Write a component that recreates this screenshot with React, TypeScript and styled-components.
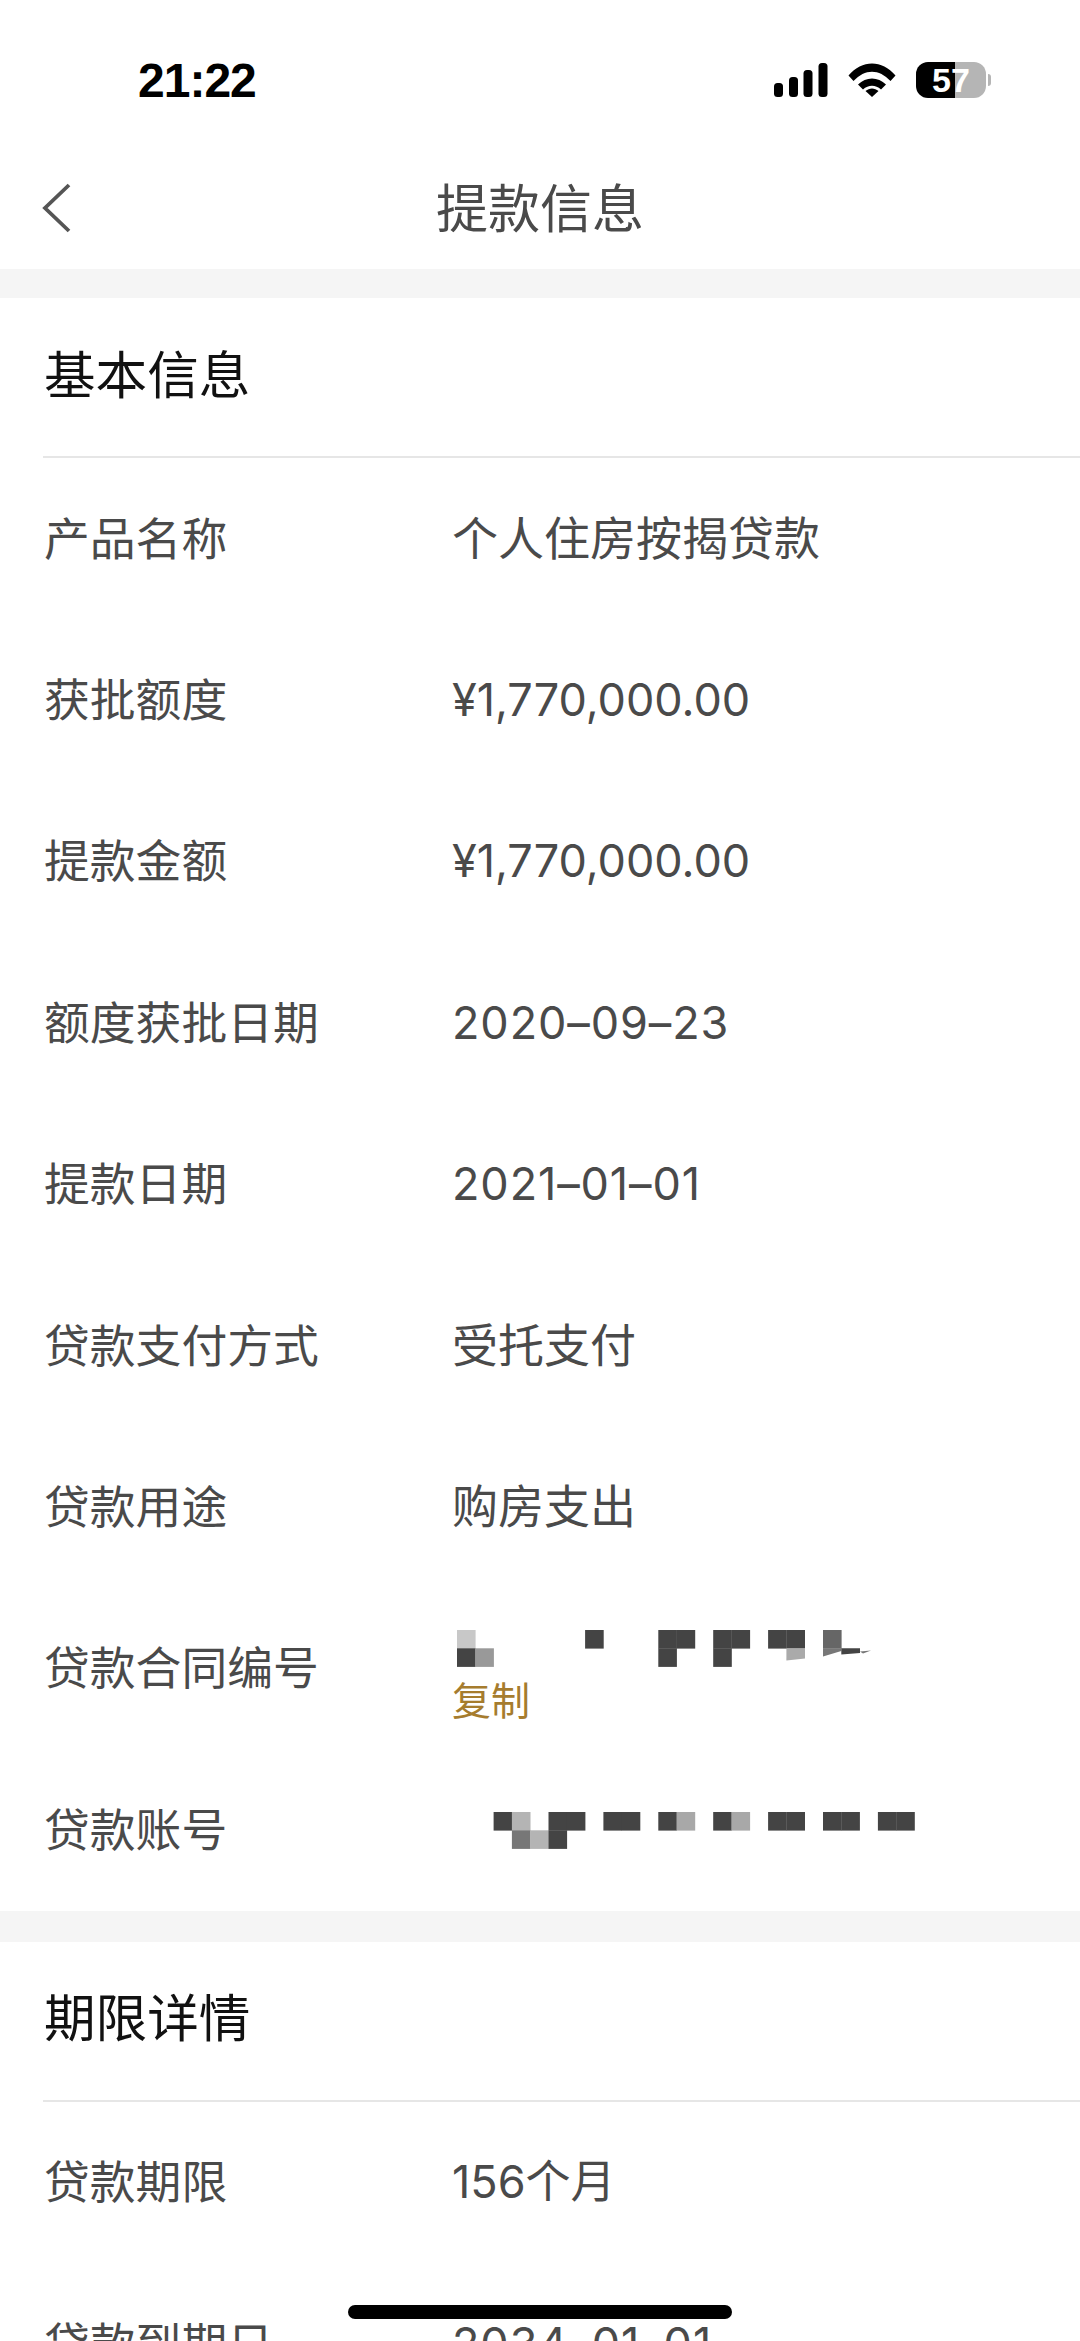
import React from 'react';
import styled, { createGlobalStyle } from 'styled-components';

const SANS = '"Liberation Sans", "Noto Sans CJK SC", sans-serif';
const NUMERIC_FONT = 'Inter, "Noto Sans CJK SC", sans-serif';
const DARK = '#444';

type Cell = { c: number; r: number; fill: string };

const contractCells: Cell[] = [
  { c: 0, r: 0, fill: '#c8c8c8' },
  { c: 7, r: 0, fill: DARK },
  { c: 11, r: 0, fill: DARK },
  { c: 12, r: 0, fill: DARK },
  { c: 14, r: 0, fill: DARK },
  { c: 15, r: 0, fill: DARK },
  { c: 17, r: 0, fill: DARK },
  { c: 18, r: 0, fill: DARK },
  { c: 20, r: 0, fill: '#666' },
  { c: 0, r: 1, fill: DARK },
  { c: 1, r: 1, fill: '#999' },
  { c: 11, r: 1, fill: DARK },
  { c: 14, r: 1, fill: DARK },
];

const accountCells: Cell[] = [
  { c: 2, r: 0, fill: DARK },
  { c: 3, r: 0, fill: '#b4b4b4' },
  { c: 5, r: 0, fill: DARK },
  { c: 6, r: 0, fill: DARK },
  { c: 8, r: 0, fill: DARK },
  { c: 9, r: 0, fill: DARK },
  { c: 11, r: 0, fill: DARK },
  { c: 12, r: 0, fill: '#a8a8a8' },
  { c: 14, r: 0, fill: DARK },
  { c: 15, r: 0, fill: '#a8a8a8' },
  { c: 17, r: 0, fill: DARK },
  { c: 18, r: 0, fill: DARK },
  { c: 20, r: 0, fill: DARK },
  { c: 21, r: 0, fill: DARK },
  { c: 23, r: 0, fill: DARK },
  { c: 24, r: 0, fill: DARK },
  { c: 3, r: 1, fill: '#777' },
  { c: 4, r: 1, fill: '#b4b4b4' },
  { c: 5, r: 1, fill: DARK },
];

const Mosaic = ({ cells, torn }: { cells: Cell[]; torn?: boolean }) => (
  <MosaicSvg viewBox="0 0 470 37" width="470" height="37">
    {cells.map((cell) => (
      <rect key={`${cell.c}-${cell.r}`} x={cell.c * 18.3} y={cell.r * 18.3} width="18.6" height="18.6" fill={cell.fill} />
    ))}
    {torn && (
      <>
        <polygon points="329.4,18.3 348,18.3 348,28.5 329.4,30.6" fill="#aaa" />
        <polygon points="366,18.3 384.3,18.3 384.3,21 366,26.5" fill="#777" />
        <polygon points="384.3,18.3 403,18.3 403,23 384.3,24.5" fill={DARK} />
        <polygon points="403,21.5 414,20.5 406,23.5" fill="#777" />
      </>
    )}
  </MosaicSvg>
);

const BackIcon = () => (
  <svg width="30" height="50" viewBox="0 0 30 50" fill="none">
    <path d="M27 2 L3 25 L27 48" stroke="#555" strokeWidth="3.8" />
  </svg>
);

const SignalIcon = () => (
  <svg width="54" height="34" viewBox="0 0 54 34" fill="#000">
    <rect x="0" y="20" width="9" height="14" rx="3.5" />
    <rect x="15" y="14" width="9" height="20" rx="3.5" />
    <rect x="29.5" y="7" width="9" height="27" rx="3.5" />
    <rect x="44.5" y="0" width="9" height="34" rx="3.5" />
  </svg>
);

const WifiIcon = () => (
  <svg width="48" height="34" viewBox="0 0 48 34" fill="#000">
    <path d="M0.5 12.5 C14 -3.5 34 -3.5 47.5 12.5 L42.5 18 C31 5.5 17 5.5 5.500 18 Z" />
    <path d="M10 21.500 C18 13.5 30 13.500 38 21.500 L33 26.500 C27.500 21.500 20.500 21.500 15 26.500 Z" />
    <path d="M17.500 28 C21.500 24.500 26.500 24.500 30.500 28 L24 34 Z" />
  </svg>
);

const rows = [
  { label: '产品名称', value: '个人住房按揭贷款' },
  { label: '获批额度', value: '¥1,770,000.00', numeric: true },
  { label: '提款金额', value: '¥1,770,000.00', numeric: true },
  { label: '额度获批日期', value: '2020–09–23', numeric: true, date: true },
  { label: '提款日期', value: '2021–01–01', numeric: true, date: true },
  { label: '贷款支付方式', value: '受托支付' },
  { label: '贷款用途', value: '购房支出' },
];

const App = () => (
  <Page>
    <GlobalStyle />
    <StatusBar>
      <Clock>21:22</Clock>
      <StatusIcons>
        <SignalIcon />
        <WifiIcon />
        <Battery>57</Battery>
      </StatusIcons>
    </StatusBar>
    <Header>
      <BackButton>
        <BackIcon />
      </BackButton>
      <HeaderTitle>提款信息</HeaderTitle>
    </Header>

    <Band />
    <SectionHead>基本信息</SectionHead>
    <Divider />
    {rows.map((row) => (
      <Row key={row.label}>
        <Label>{row.label}</Label>
        <Value $numeric={row.numeric} $date={row.date}>{row.value}</Value>
      </Row>
    ))}
    <Row>
      <Label>贷款合同编号</Label>
      <ContractValue>
        <Mosaic cells={contractCells} torn />
        <CopyLink>复制</CopyLink>
      </ContractValue>
    </Row>
    <Row>
      <Label>贷款账号</Label>
      <AccountValue>
        <Mosaic cells={accountCells} />
      </AccountValue>
    </Row>

    <Band $height={31} />
    <SectionHead>期限详情</SectionHead>
    <Divider />
    <Row>
      <Label>贷款期限</Label>
      <Value $numeric>156个月</Value>
    </Row>
    <Row>
      <Label>贷款到期日</Label>
      <Value $numeric $date>2034–01–01</Value>
    </Row>
    <HomeIndicator />
  </Page>
);

const GlobalStyle = createGlobalStyle`
  html, body {
    margin: 0;
    background: #fff;
  }
`;

const Page = styled.div`
  position: relative;
  width: 1080px;
  height: 2341px;
  overflow: hidden;
  background: #fff;
  font-family: ${SANS};
`;

const StatusBar = styled.div`
  display: flex;
  justify-content: space-between;
  align-items: flex-start;
  box-sizing: border-box;
  height: 147px;
  padding: 62px 94px 0 138px;
`;

const Clock = styled.div`
  font-size: 48px;
  line-height: 37px;
  letter-spacing: -1px;
  font-weight: 700;
  color: #000;
`;

const StatusIcons = styled.div`
  display: flex;
  align-items: center;
  gap: 20px;
`;

const Battery = styled.div`
  position: relative;
  width: 70px;
  height: 36px;
  border-radius: 12px;
  background: linear-gradient(90deg, #000 0 39px, #b5b5b5 39px);
  color: #fff;
  font-size: 34px;
  line-height: 36px;
  font-weight: 700;
  text-align: center;

  &::after {
    content: '';
    position: absolute;
    top: 12px;
    right: -5px;
    width: 3px;
    height: 12px;
    border-radius: 0 6px 6px 0;
    background: #b5b5b5;
  }
`;

const Header = styled.div`
  position: relative;
  display: flex;
  justify-content: center;
  align-items: center;
  height: 122px;
`;

const BackButton = styled.div`
  position: absolute;
  left: 42px;
  top: 36px;
  display: flex;
`;

const HeaderTitle = styled.div`
  padding-bottom: 6px;
  font-size: 52px;
  color: #4a4a4a;
`;

const Band = styled.div<{ $height?: number }>`
  height: ${(p) => p.$height ?? 29}px;
  background: #f5f5f5;
`;

const SectionHead = styled.div`
  display: flex;
  align-items: center;
  box-sizing: border-box;
  height: 158px;
  padding: 0 0 12px 44px;
  font-size: 51.6px;
  color: #111;
`;

const Divider = styled.div`
  height: 2px;
  margin-left: 43px;
  background: #e6e6e6;
`;

const Row = styled.div`
  display: grid;
  grid-template-columns: 408px 1fr;
  align-items: center;
  height: 161.4px;
  padding-left: 44px;
`;

const Label = styled.div`
  padding-bottom: 6px;
  font-size: 45.8px;
  color: #4a4a4a;
`;

const Value = styled.div<{ $numeric?: boolean; $date?: boolean }>`
  display: flex;
  flex-direction: column;
  font-family: ${(p) => (p.$numeric ? NUMERIC_FONT : SANS)};
  font-size: ${(p) => (p.$numeric ? 45 : 46)}px;
  letter-spacing: ${(p) => (p.$date ? '0.9px' : 'normal')};
  line-height: 60px;
  color: #4a4a4a;
`;

const ContractValue = styled(Value)`
  padding-top: 20px;
`;

const AccountValue = styled(Value)`
  padding-top: 2px;
`;

const MosaicSvg = styled.svg`
  display: block;
  margin-left: 5px;
`;

const CopyLink = styled.span`
  margin-top: 10px;
  font-size: 39px;
  line-height: 50px;
  color: #a67c2e;
`;

const HomeIndicator = styled.div`
  position: absolute;
  left: 348px;
  top: 2305px;
  width: 384px;
  height: 14px;
  border-radius: 7px;
  background: #000;
`;

export default App;
